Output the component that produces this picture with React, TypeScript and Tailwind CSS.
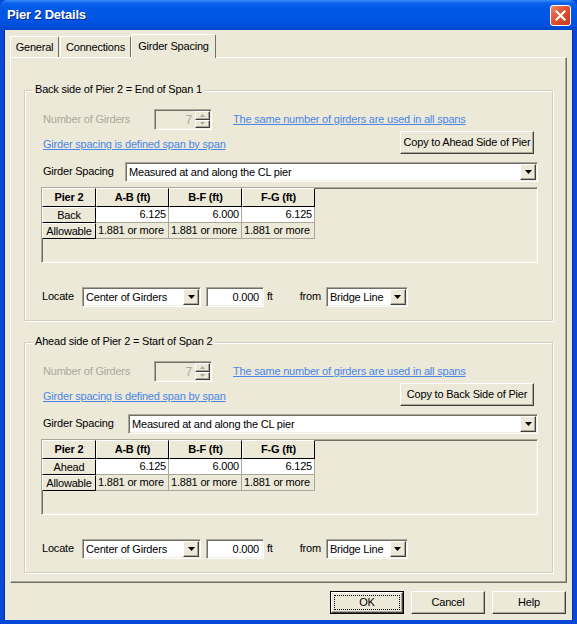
import React from "react";

// classic 3D edges
const sunken =
  "border border-t-[#aca899] border-l-[#aca899] border-r-white border-b-white shadow-[inset_1px_1px_0_#716f64,inset_-1px_-1px_0_#f1efe2]";
const raised =
  "border border-t-white border-l-white border-r-[#404040] border-b-[#404040] shadow-[inset_-1px_-1px_0_#aca899]";

function Arrow({ color = "#000" }: { color?: string }) {
  return (
    <svg width="7" height="4" viewBox="0 0 7 4">
      <path d="M0 0h7L3.5 4z" fill={color} />
    </svg>
  );
}

function Combo({ text, className = "" }: { text: string; className?: string }) {
  return (
    <div className={`${sunken} bg-white h-[20px] flex items-center ${className}`}>
      <span className="flex-1 pl-[3px] truncate">{text}</span>
      <div className={`${raised} bg-[#ece9d8] w-[16px] h-[16px] mr-[1px] flex items-center justify-center`}>
        <Arrow />
      </div>
    </div>
  );
}

function Btn({ children, className = "" }: { children: React.ReactNode; className?: string }) {
  return (
    <div className={`${raised} bg-[#ece9d8] h-[23px] flex items-center justify-center ${className}`}>
      {children}
    </div>
  );
}

function Spinner() {
  return (
    <div className={`${sunken} w-[58px] h-[21px] bg-[#ece9d8] flex items-center`}>
      <span className="flex-1 text-right pr-[3px] text-[#aca899] text-[12px]">7</span>
      <div className="flex flex-col w-[15px] h-[17px] mr-[1px]">
        <div className={`${raised} bg-[#ece9d8] flex-1 flex items-center justify-center`}>
          <svg width="5" height="3" viewBox="0 0 5 3">
            <path d="M2.5 0L5 3H0z" fill="#aca899" />
          </svg>
        </div>
        <div className={`${raised} bg-[#ece9d8] flex-1 flex items-center justify-center`}>
          <svg width="5" height="3" viewBox="0 0 5 3">
            <path d="M0 0h5L2.5 3z" fill="#aca899" />
          </svg>
        </div>
      </div>
    </div>
  );
}

const cols = ["A-B (ft)", "B-F (ft)", "F-G (ft)"];

function Grid({ side }: { side: string }) {
  const head =
    "h-[19px] bg-[#ece9d8] border border-t-white border-l-white border-r-black border-b-black flex items-center justify-center font-bold";
  const rowHead =
    "w-[54px] h-[16px] bg-[#ece9d8] border border-t-white border-l-white border-r-black border-b-black flex items-center justify-center";
  return (
    <div className={`${sunken} h-[76px] bg-[#ece9d8] ml-[16px] mr-[14px] mt-[5px]`}>
      <div className="flex">
        <div className={`${head} w-[54px]`}>Pier 2</div>
        {cols.map((c) => (
          <div key={c} className={`${head} w-[73px]`}>
            {c}
          </div>
        ))}
      </div>
      <div className="flex">
        <div className={rowHead}>{side}</div>
        {["6.125", "6.000", "6.125"].map((v, i) => (
          <div
            key={i}
            className="w-[73px] h-[16px] bg-white border-r border-b border-[#aca899] flex items-center justify-end pr-[2px]"
          >
            {v}
          </div>
        ))}
      </div>
      <div className="flex">
        <div className={rowHead}>Allowable</div>
        {[0, 1, 2].map((i) => (
          <div
            key={i}
            className="w-[73px] h-[16px] border-r border-b border-[#aca899] flex items-center pl-[2px]"
          >
            1.881 or more
          </div>
        ))}
      </div>
    </div>
  );
}

function Group({
  title,
  copyLabel,
  side,
  comboLeft,
  className = "",
}: {
  title: string;
  copyLabel: string;
  side: string;
  comboLeft: string;
  className?: string;
}) {
  return (
    <div
      className={`relative mx-[13px] border border-[#d0d0bf] shadow-[1px_1px_0_white,inset_1px_1px_0_white] pt-[18px] pb-[13px] ${className}`}
    >
      <span className="absolute -top-[8px] left-[8px] px-[2px] bg-[#ece9d8] leading-[13px]">{title}</span>

      {/* number of girders */}
      <div className="flex items-center h-[21px] pl-[18px]">
        <span className="w-[111px] text-[#aca899]">Number of Girders</span>
        <Spinner />
        <span className="ml-[21px] text-[#4a86e8] underline">
          The same number of girders are used in all spans
        </span>
      </div>

      {/* span by span / copy */}
      <div className="flex items-center justify-between h-[23px] mt-[1px] pl-[18px] pr-[18px]">
        <span className="text-[#4a86e8] underline mt-[3px]">Girder spacing is defined span by span</span>
        <Btn className="w-[134px]">{copyLabel}</Btn>
      </div>

      {/* girder spacing combo */}
      <div className="flex items-center mt-[8px] pl-[18px] pr-[14px]">
        <span className="w-[82px] -mt-[2px]">Girder Spacing</span>
        <Combo text="Measured at and along the CL pier" className={`flex-1 ${comboLeft}`} />
      </div>

      <Grid side={side} />

      {/* locate */}
      <div className="flex items-center h-[20px] mt-[24px] pl-[17px]">
        <span className="w-[40px] -mt-[1px]">Locate</span>
        <Combo text="Center of Girders" className="w-[119px]" />
        <div className={`${sunken} ml-[5px] w-[58px] h-[20px] bg-white flex items-center justify-end pr-[4px]`}>
          0.000
        </div>
        <span className="ml-[3px] -mt-[1px]">ft</span>
        <span className="ml-[27px] -mt-[1px]">from</span>
        <Combo text="Bridge Line" className="ml-[5px] w-[82px]" />
      </div>
    </div>
  );
}

export default function App() {
  return (
    <div className="w-[577px] h-[624px] bg-[#0848d8] flex flex-col font-['Liberation_Sans',Arial,sans-serif] text-[11px] tracking-[-0.2px] text-black overflow-hidden select-none">
      {/* title bar */}
      <div className="h-[30px] shrink-0 flex items-center pl-[7px] pr-[6px] rounded-t-[7px] bg-[linear-gradient(to_bottom,#3c8ef8_0%,#0a62ec_10%,#0058e6_30%,#0256e4_60%,#004fdc_85%,#0046c8_100%)]">
        <span className="flex-1 text-white font-bold text-[13px] tracking-[-0.2px] [text-shadow:1px_1px_0_#0a2a8c]">
          Pier 2 Details
        </span>
        <div className="w-[21px] h-[21px] rounded-[3px] border border-white bg-[linear-gradient(135deg,#f08a6a_0%,#e0512f_45%,#c43a1a_100%)] flex items-center justify-center">
          <svg width="11" height="11" viewBox="0 0 11 11">
            <path d="M1.5 1.5l8 8M9.5 1.5l-8 8" stroke="white" strokeWidth="2.2" strokeLinecap="square" />
          </svg>
        </div>
      </div>

      {/* dialog body */}
      <div className="flex-1 mx-[4px] mb-[4px] bg-[#ece9d8] flex flex-col px-[5px] border-l border-r border-[#0831a0]">
        {/* tabs */}
        <div className="h-[27px] flex items-end relative z-10">
          <div className="h-[21px] w-[49px] border-t border-l border-white border-r border-r-[#716f64] rounded-t-[2px] flex items-center justify-center">
            General
          </div>
          <div className="h-[21px] w-[71px] ml-[1px] border-t border-l border-white border-r border-r-[#716f64] rounded-t-[2px] flex items-center justify-center">
            Connections
          </div>
          <div className="h-[24px] w-[85px] -mb-[1px] bg-[#ece9d8] border-t border-l border-white border-r border-r-[#716f64] rounded-t-[2px] flex items-start justify-center pt-[3px]">
            Girder Spacing
          </div>
        </div>

        {/* tab page */}
        <div className="h-[526px] border border-t-white border-l-white border-r-[#716f64] border-b-[#716f64] shadow-[inset_-1px_-1px_0_#aca899] flex flex-col">
          <Group
            title="Back side of Pier 2 = End of Span 1"
            copyLabel="Copy to Ahead Side of Pier"
            side="Back"
            comboLeft=""
            className="mt-[32px]"
          />
          <Group
            title="Ahead side of Pier 2 = Start of Span 2"
            copyLabel="Copy to Back Side of Pier"
            side="Ahead"
            comboLeft="ml-[3px]"
            className="mt-[21px]"
          />
        </div>

        {/* dialog buttons */}
        <div className="flex justify-end gap-[7px] mt-[8px] pr-[1px]">
          <div className="w-[74px] h-[23px] border border-black">
            <div className={`${raised} bg-[#ece9d8] w-full h-full p-[2px]`}>
              <div className="w-full h-full border border-dotted border-black flex items-center justify-center">
                OK
              </div>
            </div>
          </div>
          <Btn className="w-[74px]">Cancel</Btn>
          <Btn className="w-[74px]">Help</Btn>
        </div>
      </div>
    </div>
  );
}
